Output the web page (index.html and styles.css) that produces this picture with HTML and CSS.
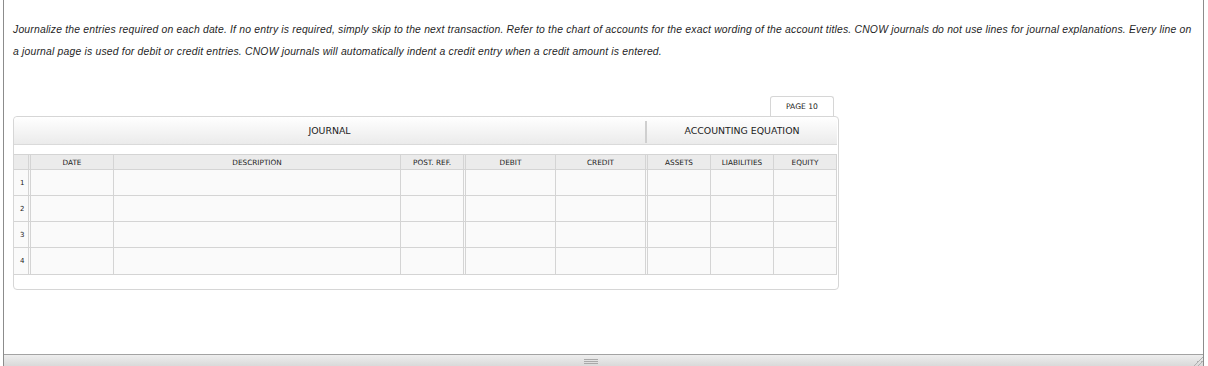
FILE: index.html
```html
<!DOCTYPE html>
<html>
<head>
<meta charset="utf-8">
<link rel="stylesheet" href="styles.css">
</head>
<body>
<div class="frame">
  <div class="content">
    <p class="instructions">Journalize the entries required on each date. If no entry is required, simply skip to the next transaction. Refer to the chart of accounts for the exact wording of the account titles. CNOW journals do not use lines for journal explanations. Every line on a journal page is used for debit or credit entries. CNOW journals will automatically indent a credit entry when a credit amount is entered.</p>
    <div class="journal-wrap">
      <div class="tab-row"><div class="page-tab">PAGE 10</div></div>
      <div class="journal-box">
        <div class="band">
          <div class="band-journal">JOURNAL</div>
          <div class="band-sep"></div>
          <div class="band-eq">ACCOUNTING EQUATION</div>
        </div>
        <div class="grid">
          <div class="hd c-num dbl"></div>
          <div class="hd">DATE</div>
          <div class="hd">DESCRIPTION</div>
          <div class="hd dbl">POST. REF.</div>
          <div class="hd">DEBIT</div>
          <div class="hd dbl">CREDIT</div>
          <div class="hd">ASSETS</div>
          <div class="hd">LIABILITIES</div>
          <div class="hd">EQUITY</div>

          <div class="cell num dbl">1</div><div class="cell"></div><div class="cell"></div><div class="cell dbl"></div><div class="cell"></div><div class="cell dbl"></div><div class="cell"></div><div class="cell"></div><div class="cell"></div>
          <div class="cell num dbl">2</div><div class="cell"></div><div class="cell"></div><div class="cell dbl"></div><div class="cell"></div><div class="cell dbl"></div><div class="cell"></div><div class="cell"></div><div class="cell"></div>
          <div class="cell num dbl">3</div><div class="cell"></div><div class="cell"></div><div class="cell dbl"></div><div class="cell"></div><div class="cell dbl"></div><div class="cell"></div><div class="cell"></div><div class="cell"></div>
          <div class="cell num dbl">4</div><div class="cell"></div><div class="cell"></div><div class="cell dbl"></div><div class="cell"></div><div class="cell dbl"></div><div class="cell"></div><div class="cell"></div><div class="cell"></div>
        </div>
      </div>
    </div>
  </div>
  <div class="statusbar">
    <div class="grip"></div>
    <div class="resize"></div>
  </div>
</div>
</body>
</html>
```

FILE: styles.css
```css
html, body {
  margin: 0;
  padding: 0;
  background: #ffffff;
}

.frame {
  margin-left: 3px;
  width: 1201px;
  height: 366px;
  box-sizing: border-box;
  border-left: 1px solid #8c8c8c;
  border-right: 1px solid #8c8c8c;
  display: flex;
  flex-direction: column;
  overflow: hidden;
}

.content {
  flex: 1;
  padding-left: 9px;
}

.instructions {
  margin: 0;
  padding-top: 19px;
  font-family: "Liberation Sans", Arial, sans-serif;
  font-style: italic;
  font-size: 10.4px;
  letter-spacing: 0.185px;
  line-height: 22px;
  color: #1f1f1f;
  width: 1182px;
}

.journal-wrap {
  margin-top: 33px;
  width: 826px;
  font-family: "DejaVu Sans", Tahoma, sans-serif;
  color: #333333;
}

.tab-row {
  display: flex;
  justify-content: flex-end;
  padding-right: 5px;
}

.page-tab {
  width: 64px;
  height: 20px;
  box-sizing: border-box;
  border: 1px solid #d6d6d6;
  border-bottom: none;
  border-radius: 3px 3px 0 0;
  font-size: 7.6px;
  display: flex;
  align-items: center;
  justify-content: center;
  color: #222;
  background: #ffffff;
}

.journal-box {
  border: 1px solid #d6d6d6;
  border-radius: 4px;
  padding-bottom: 14px;
  padding-right: 1px;
}

.band {
  height: 27px;
  border-bottom: 1px solid #dadada;
  background: linear-gradient(#ffffff, #ebebeb);
  border-radius: 4px 4px 0 0;
  display: flex;
  align-items: center;
  font-size: 9.4px;
  color: #222;
  margin-bottom: 9px;
}

.band-journal {
  width: 631px;
  text-align: center;
}

.band-sep {
  width: 2px;
  height: 22px;
  margin-top: 3px;
  background: #cfcfcf;
}

.band-eq {
  flex: 1;
  text-align: center;
}

.grid {
  display: grid;
  grid-template-columns: 17px 83px 287px 65px 90px 92px 63px 63px 63px;
  grid-template-rows: 15px 26px 26px 26px 27px;
  border-top: 1px solid #d4d4d4;
}

.grid > div {
  box-sizing: border-box;
  border-right: 1px solid #d4d4d4;
  border-bottom: 1px solid #d4d4d4;
}

.grid > div.dbl {
  border-right: 3px double #d4d4d4;
}

.hd {
  background: #ebebeb;
  font-size: 7.3px;
  color: #222;
  display: flex;
  align-items: center;
  justify-content: center;
}

.cell {
  background: #fafafa;
}

.num {
  font-size: 7px;
  color: #222;
  display: flex;
  align-items: center;
  padding-left: 6px;
}

.statusbar {
  height: 11px;
  border-top: 1px solid #a3a3a3;
  background: linear-gradient(#eeeeee, #d9d9d9);
  position: relative;
  display: flex;
  justify-content: center;
}

.grip {
  width: 14px;
  height: 5px;
  margin-top: 4px;
  margin-right: 26px;
  background: repeating-linear-gradient(#a9a9a9 0, #a9a9a9 1px, transparent 1px, transparent 2px);
}

.resize {
  position: absolute;
  right: 0;
  bottom: 0;
  width: 10px;
  height: 10px;
  background: linear-gradient(135deg, transparent 50%, #b0b0b0 50%, #b0b0b0 58%, transparent 58%, transparent 70%, #b0b0b0 70%, #b0b0b0 78%, transparent 78%);
}
```
